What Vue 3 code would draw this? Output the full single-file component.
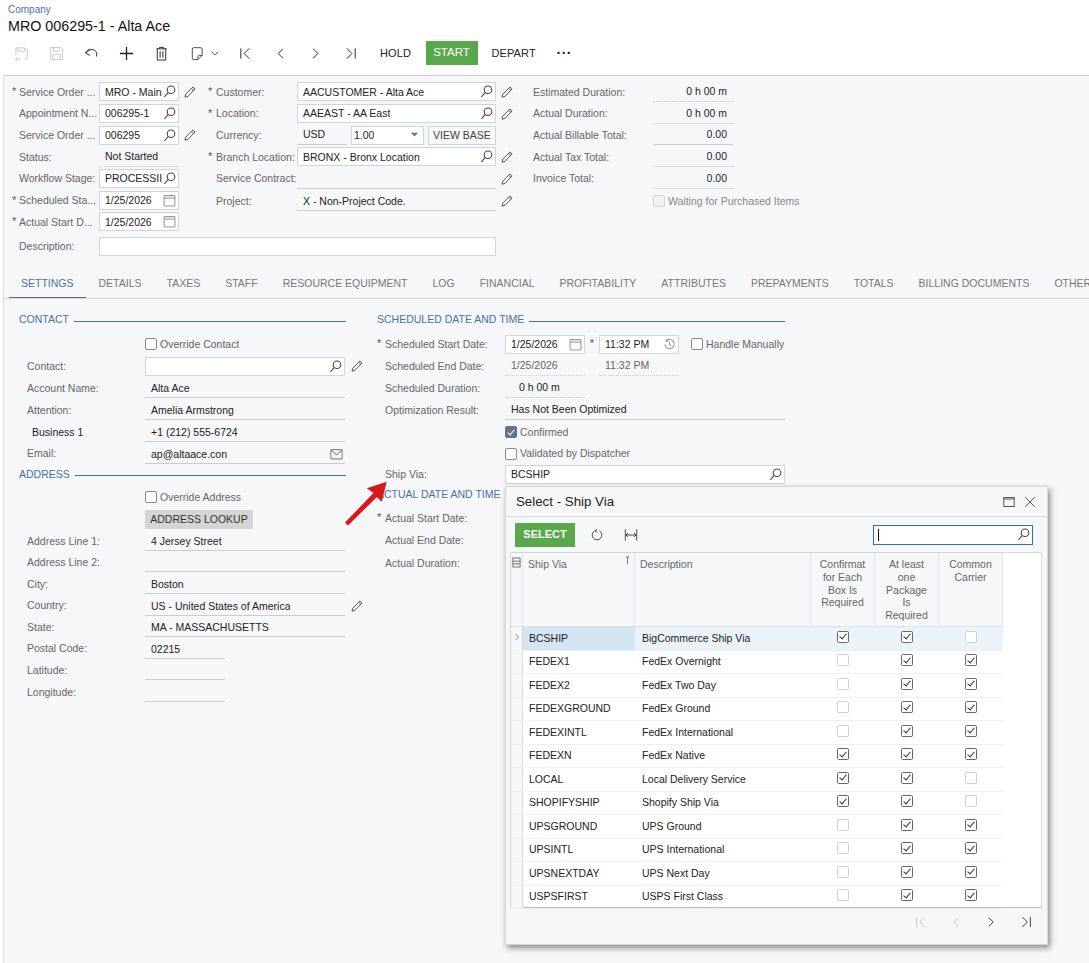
<script setup>
const T = (cls, text, icon) => ({ cls, text, icon })
const pen = { cls: 'pen', icon: 'pen' }
const lookup = (w, text) => T('box ' + w, text, 'search')
const date = (text) => T('box w80', text, 'cal')

const toolbarLeft = [
  { n: 'saveclose', off: true }, { n: 'save', off: true }, { n: 'undo' }, { n: 'plus' }, { n: 'trash' }
]
const toolbarNav = ['first', 'prev', 'next', 'last']

const topCols = [
  {
    cls: 'c1',
    rows: [
      { star: 1, label: 'Service Order ...', fields: [lookup('w80', 'MRO - Main'), pen] },
      { label: 'Appointment N...', fields: [lookup('w80', '006295-1')] },
      { label: 'Service Order ...', fields: [lookup('w80', '006295'), pen] },
      { label: 'Status:', fields: [T('dot w80', 'Not Started')] },
      { label: 'Workflow Stage:', fields: [lookup('w80', 'PROCESSII')] },
      { star: 1, label: 'Scheduled Sta...', fields: [date('1/25/2026')] },
      { star: 1, label: 'Actual Start D...', fields: [date('1/25/2026')] }
    ]
  },
  {
    cls: 'c2',
    rows: [
      { star: 1, label: 'Customer:', fields: [lookup('w199', 'AACUSTOMER - Alta Ace'), pen] },
      { star: 1, label: 'Location:', fields: [lookup('w199', 'AAEAST - AA East'), pen] },
      { label: 'Currency:', fields: [T('under w50', 'USD'), T('box w73 ml4 sel', '1.00', 'caret'), T('btnlight ml4', 'VIEW BASE')] },
      { star: 1, label: 'Branch Location:', fields: [lookup('w199', 'BRONX - Bronx Location'), pen] },
      { label: 'Service Contract:', fields: [T('under w199', ''), pen] },
      { label: 'Project:', h: 24, fields: [T('under w199', 'X - Non-Project Code.'), pen] }
    ]
  },
  {
    cls: 'c3',
    rows: [
      { label: 'Estimated Duration:', fields: [T('dot w80 num', '0 h 00 m')] },
      { label: 'Actual Duration:', fields: [T('dot w80 num', '0 h 00 m')] },
      { label: 'Actual Billable Total:', fields: [T('under w80 num', '0.00')] },
      { label: 'Actual Tax Total:', fields: [T('dot w80 num', '0.00')] },
      { label: 'Invoice Total:', fields: [T('dot w80 num', '0.00')] },
      { label: '', h: 24, fields: [T('check off', 'Waiting for Purchased Items')] }
    ]
  }
]

const tabs = ['Settings', 'Details', 'Taxes', 'Staff', 'Resource Equipment', 'Log', 'Financial', 'Profitability', 'Attributes', 'Prepayments', 'Totals', 'Billing Documents', 'Other']

const lowerCols = [
  {
    cls: 'c4',
    rows: [
      { head: 'CONTACT', h: 25 },
      { label: '', h: 22, fields: [T('check', 'Override Contact')] },
      { label: 'Contact:', h: 22, fields: [lookup('w200', ''), pen] },
      { label: 'Account Name:', h: 22.5, fields: [T('under w200', 'Alta Ace')] },
      { label: 'Attention:', h: 21.5, fields: [T('under w200', 'Amelia Armstrong')] },
      { label: 'Business 1', dark: 1, h: 22, fields: [T('under w200', '+1 (212) 555-6724')] },
      { label: 'Email:', h: 21, fields: [T('under w200', 'ap@altaace.con', 'mail')] },
      { head: 'ADDRESS', h: 22 },
      { label: '', h: 22.75, fields: [T('check', 'Override Address')] },
      { label: '', h: 21.5, fields: [T('btngrey', 'ADDRESS LOOKUP')] },
      { label: 'Address Line 1:', h: 21.25, fields: [T('under w200', '4 Jersey Street')] },
      { label: 'Address Line 2:', h: 21.5, fields: [T('under w200', '')] },
      { label: 'City:', h: 22, fields: [T('under w200', 'Boston')] },
      { label: 'Country:', h: 21.5, fields: [T('under w200', 'US - United States of America'), pen] },
      { label: 'State:', h: 21.5, fields: [T('under w200', 'MA - MASSACHUSETTS')] },
      { label: 'Postal Code:', h: 21.5, fields: [T('under w80', '02215')] },
      { label: 'Latitude:', h: 21.5, fields: [T('under w80', '')] },
      { label: 'Longitude:', h: 22, fields: [T('under w80', '')] }
    ]
  },
  {
    cls: 'c5',
    rows: [
      { head: 'SCHEDULED DATE AND TIME', h: 25 },
      { star: 1, label: 'Scheduled Start Date:', h: 22, fields: [date('1/25/2026'), T('midstar', '*'), T('box w80', '11:32 PM', 'clock'), T('check ml12', 'Handle Manually')] },
      { label: 'Scheduled End Date:', h: 22, fields: [T('dot w80 soft', '1/25/2026'), T('dot w80 ml14 soft', '11:32 PM')] },
      { label: 'Scheduled Duration:', h: 22, fields: [T('dot w80 dur', '0 h 00 m')] },
      { label: 'Optimization Result:', h: 22, fields: [T('under w280', 'Has Not Been Optimized')] },
      { label: '', h: 22, fields: [T('check on', 'Confirmed')] },
      { label: '', h: 21.5, fields: [T('check', 'Validated by Dispatcher')] },
      { label: 'Ship Via:', h: 20.5, fields: [lookup('w280', 'BCSHIP')] },
      { head: 'ACTUAL DATE AND TIME', h: 21.5 },
      { star: 1, label: 'Actual Start Date:', h: 23, fields: [] },
      { label: 'Actual End Date:', h: 22.5, fields: [] },
      { label: 'Actual Duration:', h: 22, fields: [] }
    ]
  }
]

const heads = [
  { lines: ['Ship Via'], left: true, sort: true },
  { lines: ['Description'], left: true },
  { lines: ['Confirmat', 'for Each', 'Box Is', 'Required'] },
  { lines: ['At least', 'one', 'Package', 'Is', 'Required'] },
  { lines: ['Common', 'Carrier'] }
]

const grid = [
  ['BCSHIP', 'BigCommerce Ship Via', 1, 1, 0],
  ['FEDEX1', 'FedEx Overnight', 0, 1, 1],
  ['FEDEX2', 'FedEx Two Day', 0, 1, 1],
  ['FEDEXGROUND', 'FedEx Ground', 0, 1, 1],
  ['FEDEXINTL', 'FedEx International', 0, 1, 1],
  ['FEDEXN', 'FedEx Native', 1, 1, 1],
  ['LOCAL', 'Local Delivery Service', 1, 1, 0],
  ['SHOPIFYSHIP', 'Shopify Ship Via', 1, 1, 0],
  ['UPSGROUND', 'UPS Ground', 0, 1, 1],
  ['UPSINTL', 'UPS International', 0, 1, 1],
  ['UPSNEXTDAY', 'UPS Next Day', 0, 1, 1],
  ['USPSFIRST', 'USPS First Class', 0, 1, 1]
]
</script>

<template>
  <div class="app">
    <svg class="defs" width="0" height="0" aria-hidden="true">
      <symbol id="i-search" viewBox="0 0 12 12"><circle cx="7.4" cy="4.4" r="3.5" /><path d="M4.9 6.900 1.300 11" /></symbol>
      <symbol id="i-pen" viewBox="0 0 12 12"><path d="M9 .9l2 2L4 10.400 1 11.200l.7-3zM7.700 2.300l2 2" /></symbol>
      <symbol id="i-cal" viewBox="0 0 12 12"><rect x="1" y="1.500" width="10" height="9.500" rx=".8" /><path d="M1 3.800h10" /></symbol>
      <symbol id="i-caret" viewBox="0 0 12 12"><path class="fill" d="M2.500 3.500h7L6 7z" /></symbol>
      <symbol id="i-clock" viewBox="0 0 12 12"><path d="M3 2.600a4.300 4.300 0 1 1-1.200 3.200M3 .9v2h2M6 3.600V6l1.600 1" /></symbol>
      <symbol id="i-mail" viewBox="0 0 12 12"><rect x=".8" y="1.500" width="10.400" height="8.500" rx=".6" /><path d="M1 2l5 4.300L11 2" /></symbol>
      <symbol id="i-saveclose" viewBox="0 0 16 16"><path d="M2 9V2h2v3.500h7V2H4M11 2l3 2v10h-3M7 14H2M4 11.500 1.500 14 4 16.500" /></symbol>
      <symbol id="i-save" viewBox="0 0 16 16"><path d="M1.500 1.500h11l2 2v11h-13zM4.500 1.500v4h6.500v-4M4 14.500V9h8v5.500" /></symbol>
      <symbol id="i-undo" viewBox="0 0 16 16"><path d="M1.500 7.500 6 2.800M1.500 7.500 6.300 10M2 7.400C4.500 4.400 8 3 10.800 4.300c2.700 1.300 3.500 4.400 2.300 6.900" /></symbol>
      <symbol id="i-plus" viewBox="0 0 16 16"><path class="bold" d="M8 1v14M1 8h14" /></symbol>
      <symbol id="i-trash" viewBox="0 0 16 16"><path d="M2.500 3h11M5.800 3V1.500h4.400V3M3.500 3v12h9V3M6.500 5.500v7M9.500 5.500v7" /></symbol>
      <symbol id="i-copy" viewBox="0 0 16 16"><path d="M5 1.800h7.500c1 0 1.500.5 1.500 1.500v6.700l-4.500 4.500H5c-1 0-1.500-.5-1.500-1.500V3.300c0-1 .5-1.500 1.500-1.500zM9.500 14.500v-3c0-1 .5-1.500 1.500-1.500h3" /></symbol>
      <symbol id="i-chev" viewBox="0 0 12 12"><path d="M2 4.500 6 8.500l4-4" /></symbol>
      <symbol id="i-first" viewBox="0 0 16 16"><path d="M3 2.500v11M12 2.500 6.500 8l5.500 5.500" /></symbol>
      <symbol id="i-prev" viewBox="0 0 16 16"><path d="M10.500 3 5.500 8l5 5" /></symbol>
      <symbol id="i-next" viewBox="0 0 16 16"><path d="M5.500 3l5 5-5 5" /></symbol>
      <symbol id="i-last" viewBox="0 0 16 16"><path d="M13 2.500v11M4 2.500 9.500 8 4 13.500" /></symbol>
      <symbol id="i-refresh" viewBox="0 0 16 16"><path d="M5.200 3.300a5.500 5.500 0 1 0 5.600 0M8.200 1 5.600 3.200 8.500 5" /></symbol>
      <symbol id="i-fit" viewBox="0 0 16 16"><path d="M1.500 1.500v13M14.500 1.500v13M2 8h12M4.500 5.800 2.300 8l2.200 2.200M11.500 5.800 13.700 8l-2.200 2.200" /></symbol>
      <symbol id="i-max" viewBox="0 0 12 12"><rect x=".8" y="1.500" width="10.400" height="9" /><path class="thick" d="M.8 3h10.400" /></symbol>
      <symbol id="i-close" viewBox="0 0 12 12"><path d="M1.200 1.200l9.600 9.600M10.800 1.200l-9.600 9.600" /></symbol>
      <symbol id="i-cols" viewBox="0 0 10 12"><rect x="1" y="1" width="8" height="10" /><path d="M1 4.500h8M1 7.500h8" /></symbol>
      <symbol id="i-sort" viewBox="0 0 8 10"><path d="M4 1v8M2 1h4" /></symbol>
    </svg>

    <header class="top">
      <a class="crumb">Company</a>
      <h1 class="title">MRO 006295-1 - Alta Ace</h1>
      <div class="tools">
        <button v-for="b in toolbarLeft" :key="b.n" class="tool" :class="{ off: b.off }">
          <svg class="ti"><use :href="'#i-' + b.n" /></svg>
        </button>
        <button class="tool copy">
          <svg class="ti"><use href="#i-copy" /></svg>
          <svg class="tc"><use href="#i-chev" /></svg>
        </button>
        <button v-for="n in toolbarNav" :key="n" class="tool">
          <svg class="ti"><use :href="'#i-' + n" /></svg>
        </button>
        <button class="word hold">HOLD</button>
        <button class="start">START</button>
        <button class="word depart">DEPART</button>
        <span class="dots">···</span>
      </div>
    </header>

    <main class="page">
      <section class="form">
        <div v-for="col in topCols" :key="col.cls" class="col" :class="col.cls">
          <div v-for="(r, i) in col.rows" :key="i" class="row" :style="r.h ? { height: r.h + 'px' } : null">
            <span class="star">{{ r.star ? '*' : '' }}</span>
            <span class="lab">{{ r.label }}</span>
            <div v-for="(f, j) in r.fields" :key="j" class="fld" :class="f.cls">
              <i v-if="f.cls && f.cls.includes('check')" class="cb" />
              <span class="txt">{{ f.text }}</span>
              <svg v-if="f.icon" class="ic" :class="'ic-' + f.icon"><use :href="'#i-' + f.icon" /></svg>
            </div>
          </div>
        </div>
        <div class="row desc">
          <span class="star" />
          <span class="lab">Description:</span>
          <div class="fld box descbox" />
        </div>
      </section>

      <nav class="tabs">
        <span v-for="(t, i) in tabs" :key="t" class="tab" :class="{ active: i === 0 }">{{ t }}</span>
      </nav>

      <section class="lower">
        <div v-for="col in lowerCols" :key="col.cls" class="col" :class="col.cls">
          <div v-for="(r, i) in col.rows" :key="i" class="row" :style="{ height: r.h + 'px' }">
            <div v-if="r.head" class="head"><span>{{ r.head }}</span><i /></div>
            <template v-else>
              <span class="star">{{ r.star ? '*' : '' }}</span>
              <span class="lab" :class="{ dark: r.dark }"><span>{{ r.label }}</span></span>
              <div v-for="(f, j) in r.fields" :key="j" class="fld" :class="f.cls">
                <i v-if="f.cls && f.cls.includes('check')" class="cb" />
                <span class="txt">{{ f.text }}</span>
                <svg v-if="f.icon" class="ic" :class="'ic-' + f.icon"><use :href="'#i-' + f.icon" /></svg>
              </div>
            </template>
          </div>
        </div>
      </section>
    </main>

    <svg class="arrow" width="50" height="50" viewBox="0 0 50 50">
      <path d="M43.700 3.700 38.700 23.700 34 19 5 47.500 2 44.500 30.500 15 23.700 10.300z" />
    </svg>

    <aside class="dialog">
      <div class="dhead">
        <span class="dtitle">Select - Ship Via</span>
        <svg class="dmax"><use href="#i-max" /></svg>
        <svg class="dmax"><use href="#i-close" /></svg>
      </div>
      <div class="dtools">
        <button class="select">SELECT</button>
        <svg class="dti"><use href="#i-refresh" /></svg>
        <svg class="dti"><use href="#i-fit" /></svg>
        <div class="dsearch"><b class="caretbar" /><svg class="ic"><use href="#i-search" /></svg></div>
      </div>
      <div class="grid">
        <div class="gr ghead">
          <div class="gut"><svg class="gcols"><use href="#i-cols" /></svg></div>
          <div v-for="h in heads" :key="h.lines[0]" class="hc" :class="{ left: h.left }">
            <div v-for="l in h.lines" :key="l" class="hl">{{ l }}</div>
            <svg v-if="h.sort" class="sort"><use href="#i-sort" /></svg>
          </div>
        </div>
        <div v-for="(r, i) in grid" :key="r[0]" class="gr row-g" :class="{ cur: i === 0 }">
          <div class="gut"><svg v-if="i === 0" class="gnext"><use href="#i-next" /></svg></div>
          <div class="cell first">{{ r[0] }}</div>
          <div class="cell">{{ r[1] }}</div>
          <div v-for="k in [2, 3, 4]" :key="k" class="cell mid">
            <i class="gcb" :class="{ yes: r[k] }" />
          </div>
        </div>
      </div>
      <div class="pager">
        <svg class="pg off"><use href="#i-first" /></svg>
        <svg class="pg off"><use href="#i-prev" /></svg>
        <svg class="pg"><use href="#i-next" /></svg>
        <svg class="pg"><use href="#i-last" /></svg>
      </div>
    </aside>
  </div>
</template>

<style>
html, body { margin: 0; background: #fff; }
</style>

<style scoped>
.app {
  position: relative;
  width: 1089px;
  height: 963px;
  overflow: hidden;
  font: 10.5px/1.2 "Liberation Sans", Arial, sans-serif;
  color: #222;
  background: #fff;
}
.defs { position: absolute; }
svg { fill: none; stroke: currentColor; stroke-width: 1; display: block; flex: none; }
symbol .fill { fill: currentColor; stroke: none; }
symbol .bold { stroke-width: 1.400; }
button { font: inherit; border: 0; background: none; padding: 0; color: inherit; }

.top { height: 75px; box-sizing: border-box; padding: 4px 0 0 8px; }
.crumb { display: block; height: 13px; line-height: 12px; font-size: 10px; color: #4a6fa5; }
.title { margin: 0; font-size: 14.300px; font-weight: 400; line-height: 18px; color: #111; }
.tools { display: flex; align-items: center; height: 24px; margin: 6px 0 0 -4.5px; }
.tool { width: 35px; height: 24px; display: flex; align-items: center; justify-content: center; color: #222; }
.tool.off { color: #c8c8c8; }
.tool.copy { width: 49px; justify-content: flex-start; padding-left: 10px; box-sizing: border-box; color: #444; }
.ti { width: 15px; height: 15px; }
.tc { width: 10px; height: 10px; margin-left: 6px; }
.word { font-size: 11px; color: #222; letter-spacing: .1px; padding-top: 1px; }
.hold { margin-left: 12px; width: 32px; }
.start { width: 52px; height: 24px; margin-left: 14px; background: #5aa84c; color: #fff; font-size: 11.500px; }
.depart { margin-left: 14px; width: 44px; }
.dots { margin-left: 21px; font-size: 14px; letter-spacing: .5px; line-height: 10px; font-weight: 700; }

.page {
  box-sizing: border-box;
  height: 888px;
  margin-left: 3px;
  border-left: 1px solid #ddd;
  border-top: 1px solid #ccc;
  background: #f5f7f9;
}
.form {
  display: grid;
  grid-template-columns: 193px 324px 1fr;
  align-content: start;
  padding: 5px 0 0 8px;
  height: 192px;
  box-sizing: border-box;
}
.col { display: flex; flex-direction: column; }
.row { display: flex; align-items: center; height: 21.700px; flex: none; white-space: nowrap; }
.star { width: 7px; flex: none; color: #555; font-size: 11px; }
.lab { flex: none; color: #666; overflow: hidden; }
.c1 .lab { width: 80px; }
.c2 { padding-left: 3px; }
.c2 .star { width: 8px; }
.c2 .lab { width: 81px; }
.c3 .star { width: 0; }
.c3 { padding-left: 3px; }
.c3 .lab { width: 120px; }
.c3 .row { margin-left: 1px; }
.c4 { width: 366px; box-sizing: border-box; padding-left: 8px; }
.c4 .lab { width: 119px; padding-left: 1px; box-sizing: border-box; }
.c4 .under { padding-top: 2px; }
.c5 .star { width: 8px; }
.c5 .lab { width: 120px; }
.lab.dark { color: #222; padding-left: 6px; height: 100%; display: flex; align-items: center; }
.lab.dark span { display: flex; align-items: center; width: 101px; height: 21px; border-bottom: 1px dotted #ccc; margin-top: 2px; box-sizing: border-box; }

.fld { position: relative; display: flex; align-items: center; height: 19px; box-sizing: border-box; flex: none; }
.txt { overflow: hidden; }
.w50 { width: 50px; }
.w73 { width: 73px; }
.w80 { width: 80px; }
.w199 { width: 199px; }
.w200 { width: 200px; }
.w280 { width: 280px; }
.ml4 { margin-left: 4px; }
.ml12 { margin-left: 12px; }
.ml14 { margin-left: 14px; }
.box { background: #fff; border: 1px solid #d2d5d8; padding-left: 5px; justify-content: space-between; padding-right: 2px; }
.under { border-bottom: 1px solid #ccc; padding-left: 6px; justify-content: space-between; padding-right: 2px; height: 20px; }
.dot { border-bottom: 1px dotted #ccc; padding-left: 6px; height: 20px; }
.num { justify-content: flex-end; padding-right: 6px; }
.dur { padding-left: 14px; }
.soft .txt { color: #666; }
.ic { width: 13px; height: 13px; color: #444; }
.ic-cal, .ic-clock { color: #999; }
.ic-mail { color: #888; }
.ic-caret { color: #777; }
.pen { width: 23px; justify-content: flex-end; padding-right: 0; }
.pen .ic { color: #555; width: 12px; height: 12px; margin-right: 0; }
.pen .txt { display: none; }
.c1 .pen, .c2 .pen { width: 17px; }
.c4 .pen { width: 18px; }
.sel { padding-left: 2px; }
.midstar { width: 14px; text-align: center; justify-content: center; color: #555; font-size: 11px; }
.btnlight { width: 68px; height: 19px; border: 1px solid #d2d5d8; justify-content: center; color: #444; }
.btngrey { width: 108px; height: 19px; background: #d4d4d4; justify-content: center; color: #333; }
.check { color: #666; gap: 3px; }
.cb { width: 10px; height: 10px; border: 1px solid #888; border-radius: 2px; background: #fff; flex: none; position: relative; }
.check.off { color: #888; }
.check.off .cb { border-color: #d0d0d0; background: #f1f1f1; }
.check.on .cb { background: #66728a; border-color: #66728a; }
.check.on .cb::after, .gcb.yes::after {
  content: "";
  position: absolute;
  left: 3px; top: 0.500px;
  width: 3px; height: 6px;
  border: solid #fff;
  border-width: 0 1.500px 1.500px 0;
  transform: rotate(40deg);
}

.desc { grid-column: 1 / 3; margin-top: 3px; height: 21px; }
.desc .lab { width: 80px; }
.descbox { width: 397px; }

.tabs {
  display: flex;
  height: 30px;
  box-sizing: border-box;
  border-bottom: 1px solid #d6d8da;
  margin-top: 1px;
  padding-left: 4.500px;
  overflow: hidden;
}
.tab {
  flex: none;
  padding: 0 12.500px;
  line-height: 28px;
  height: 30px;
  box-sizing: border-box;
  text-transform: uppercase;
  color: #777;
  font-size: 10.500px;
}
.tab.active { color: #4a6fa5; border-bottom: 2px solid #4a6fa5; }

.lower { display: flex; padding: 9px 0 0 7px; }
.c5 { width: 408px; }
.head { display: flex; align-items: center; width: 100%; gap: 5px; color: #4a6fa5; font-size: 10.500px; margin-top: -2px; }
.c4 .head { width: 327px; }
.head i { flex: 1; height: 1px; background: #4a6fa5; margin-top: 3px; }

.arrow { position: absolute; left: 343px; top: 478px; }
.arrow path { fill: #d9181e; stroke: none; }

.dialog {
  position: absolute;
  left: 505px;
  top: 486px;
  width: 543px;
  height: 459px;
  box-sizing: border-box;
  background: #f5f7f9;
  border: 1px solid #d4d6d8;
  box-shadow: 2px 3px 6px rgba(0, 0, 0, .45);
  display: flex;
  flex-direction: column;
  padding: 0 5px 0 4px;
}
.dhead {
  height: 29px;
  flex: none;
  display: flex;
  align-items: center;
  gap: 9px;
  margin: 0 -5px 0 -4px;
  padding: 0 11px 0 10px;
  border-bottom: 1px solid #d6d8da;
  color: #555;
}
.dtitle { flex: 1; font-size: 13.300px; color: #222; }
.dmax { width: 12px; height: 12px; }
.dtools { height: 35px; flex: none; display: flex; align-items: center; padding: 0 5px; }
.select { width: 60px; height: 24px; background: #5aa84c; color: #fff; font-weight: 700; font-size: 11px; }
.dti { width: 14px; height: 14px; color: #333; }
.dti:nth-of-type(1) { margin-left: 15px; }
.dti:nth-of-type(2) { margin-left: 20px; }
.dsearch {
  margin-left: auto;
  margin-right: 4px;
  width: 160px;
  height: 20px;
  box-sizing: border-box;
  background: #fff;
  border: 1px solid #2f6dbb;
  display: flex;
  align-items: center;
  justify-content: space-between;
  padding: 0 2px 0 4px;
}
.caretbar { width: 1px; height: 12px; background: #111; }
.grid { height: 356px; flex: none; background: #fff; border: 1px solid #d4d6d8; box-sizing: border-box; border-bottom-color: #bbb; }
.gr { display: grid; grid-template-columns: 12px 112px 176px 64px 64px 64px; width: 492px; }
.ghead { height: 74px; background: #f5f7f9; border-bottom: 1px solid #dfe2e5; box-sizing: border-box; }
.ghead > div { border-right: 1px solid #e2e5e8; }
.gut { background: #f5f7f9; border-right: 1px solid #d9dcdf; box-sizing: border-box; display: flex; justify-content: center; color: #666; }
.gcols { width: 9px; height: 11px; margin-top: 4px; }
.gnext { width: 10px; height: 12px; margin-top: 4px; color: #444; }
.hc { position: relative; padding-top: 5px; color: #666; text-align: center; box-sizing: border-box; }
.hc.left { text-align: left; padding-left: 5px; }
.hl { line-height: 12.800px; height: 12.800px; overflow: hidden; white-space: nowrap; }
.sort { position: absolute; right: 3px; top: 3px; width: 7px; height: 9px; color: #666; }
.row-g { height: 23.500px; border-bottom: 1px solid #edf0f3; box-sizing: border-box; }
.row-g.cur { background: #ebf3fa; }
.row-g.cur .first { background: #d3e4f3; }
.cell { display: flex; align-items: center; padding-left: 7px; color: #222; white-space: nowrap; overflow: hidden; }
.cell.first { padding-left: 6px; }
.cell.mid { padding-left: 0; justify-content: center; padding-bottom: 3px; }
.gcb { position: relative; width: 10px; height: 10px; border: 1px solid #d0d0d0; border-radius: 1.500px; background: #fff; display: block; flex: none; }
.gcb.yes { border-color: #666; }
.gcb.yes::after { border-color: #333; border-width: 0 1.200px 1.200px 0; }
.pager { flex: 1; display: flex; align-items: center; justify-content: flex-end; padding-right: 9px; gap: 21px; padding-bottom: 8px; color: #222; }
.pg { width: 14px; height: 14px; }
.pg.off { color: #bbb; }
</style>
